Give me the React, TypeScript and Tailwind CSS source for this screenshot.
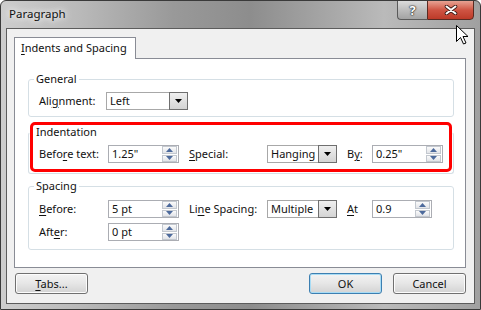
import React from "react";

function U({ c }: { c: string }) {
  return <span className="underline underline-offset-[2px] decoration-1">{c}</span>;
}

function Arrow({ up }: { up?: boolean }) {
  return (
    <svg width="7" height="4" viewBox="0 0 7 4">
      <path d={up ? "M0 4 L3.5 0 L7 4 Z" : "M0 0 L3.5 4 L7 0 Z"} fill="#4d6a9c" />
    </svg>
  );
}

function Spinner() {
  return (
    <div className="flex flex-col gap-px w-[15px] h-[16px] mr-px">
      <div className="flex-1 flex items-center justify-center border border-[#c3c8cf] bg-linear-to-b from-[#fbfbfb] to-[#e2e4e8]">
        <Arrow up />
      </div>
      <div className="flex-1 flex items-center justify-center border border-[#c3c8cf] bg-linear-to-b from-[#fbfbfb] to-[#e2e4e8]">
        <Arrow />
      </div>
    </div>
  );
}

function Spin({ value, w }: { value: string; w: string }) {
  return (
    <div className={`flex items-center h-[18px] border border-[#abadb3] bg-white ${w}`}>
      <span className="flex-1 pl-[3px] leading-[16px] whitespace-nowrap">{value}</span>
      <Spinner />
    </div>
  );
}

function Combo({ value, w }: { value: string; w: string }) {
  return (
    <div className={`flex items-center h-[18px] border border-[#a8a8a8] bg-white ${w}`}>
      <span className="flex-1 pl-[3px] leading-[16px] whitespace-nowrap">{value}</span>
      <div className="w-[19px] h-[18px] -mr-px border border-[#6f6f6f] bg-linear-to-b from-[#efefef] to-[#d4d4d4] flex items-center justify-center">
        <svg width="7" height="4" viewBox="0 0 7 4">
          <path d="M0 0 L3.5 4 L7 0 Z" fill="#000" />
        </svg>
      </div>
    </div>
  );
}

function Btn({ children, def }: { children: React.ReactNode; def?: boolean }) {
  return (
    <div
      className={`w-[73px] h-[21px] rounded-[3px] border flex items-center justify-center leading-[16px] bg-linear-to-b from-[#f3f3f3] via-[#e6e6e6] to-[#d3d3d3] ${
        def ? "border-[#3c7fb1] shadow-[inset_0_0_0_1px_#a8dcf5]" : "border-[#707070] shadow-[inset_0_0_0_1px_#fcfcfc]"
      }`}
    >
      {children}
    </div>
  );
}

export default function App() {
  return (
    <div className="relative w-[481px] h-[310px] overflow-hidden flex flex-col border border-[#3a3a3a] rounded-t-[6px] bg-[linear-gradient(to_right,#cdcdcd_0%,#bababa_16%,#999999_36%,#8d8d8d_52%,#a6a6a6_68%,#bababa_80%,#a0a0a0_100%)] px-[5px] pb-[5px] text-[11px] text-[#111] [font-family:'Noto_Sans',sans-serif] whitespace-nowrap">
      {/* title bar */}
      <div className="h-[27px] flex items-start">
        <div className="pl-[3px] pt-[5px] leading-[16px] text-[11.5px] [text-shadow:0_0_6px_#ffffff,0_0_10px_#ffffff]">Paragraph</div>
        <div className="flex-1" />
        <div className="flex mr-px -mt-px">
          <div className="w-[30px] h-[20px] rounded-bl-[4px] border border-[#5a5a5a] border-r-0 bg-linear-to-b from-[#dcdcdc] via-[#bdbdbd] to-[#a3a3a3] flex items-center justify-center text-white font-bold text-[13px] leading-none [text-shadow:0_0_1px_#222,0_0_1px_#222,0_0_2px_#333]">
            ?
          </div>
          <div className="w-[47px] h-[20px] rounded-br-[4px] border border-[#5a2a22] bg-linear-to-b from-[#e7a293] via-[#cf5443] to-[#bd3a28] flex items-center justify-center">
            <svg width="14" height="10" viewBox="0 0 14 10">
              <path d="M2.5 1.5 L11.5 8.5 M11.5 1.5 L2.5 8.5" stroke="#3a1a16" strokeWidth="3.6" strokeLinecap="round" />
              <path d="M2.5 1.5 L11.5 8.5 M11.5 1.5 L2.5 8.5" stroke="#ffffff" strokeWidth="2" strokeLinecap="round" />
            </svg>
          </div>
        </div>
      </div>

      {/* client */}
      <div className="flex-1 border border-[#5c5c5c] bg-[#f0f0f0] flex flex-col pl-[7px] pr-[8px] pt-[8px]">
        <div className="w-[122px] h-[22px] -mb-px relative z-10 bg-white border border-[#898c95] border-b-0 pl-[6px] pt-[2px] leading-[16px]">
          <U c="I" />ndents and Spacing
        </div>
        <div className="h-[210px] bg-white border border-[#898c95] flex flex-col pl-[13px] pr-[11px] pt-[12px]">
          {/* General */}
          <fieldset className="border border-[#d5dfe5] rounded-[3px] p-0 m-0">
            <legend className="ml-[5px] px-[2px] leading-[16px]">General</legend>
            <div className="pl-[10px] pt-[5px] pb-[6px]">
              <div className="flex items-center h-[18px]">
                <div className="w-[67px]">
                  Ali<U c="g" />nment:
                </div>
                <Combo value="Left" w="w-[82px]" />
              </div>
            </div>
          </fieldset>

          {/* Indentation */}
          <fieldset className="mt-[7px] border border-[#d5dfe5] border-t-transparent rounded-[3px] p-0">
            <legend className="ml-[5px] px-[2px] leading-[16px]">Indentation</legend>
            <div className="pl-[10px] pt-[5px] pb-[10px]">
              <div className="flex items-center h-[18px]">
                <div className="w-[69px]">
                  Befo<U c="r" />e text:
                </div>
                <Spin value={'1.25"'} w="w-[71px]" />
                <div className="ml-[10px] w-[78px]">
                  <U c="S" />pecial:
                </div>
                <Combo value="Hanging" w="w-[70px]" />
                <div className="ml-[10px] w-[25px]">
                  B<U c="y" />:
                </div>
                <Spin value={'0.25"'} w="w-[71px]" />
              </div>
            </div>
          </fieldset>

          {/* Spacing */}
          <fieldset className="mt-[4px] border border-[#d5dfe5] rounded-[3px] p-0">
            <legend className="ml-[5px] px-[2px] leading-[16px]">Spacing</legend>
            <div className="pl-[10px] pt-[6px] pb-[8px] flex flex-col gap-[5px]">
              <div className="flex items-center h-[18px]">
                <div className="w-[69px]">
                  <U c="B" />efore:
                </div>
                <Spin value="5 pt" w="w-[71px]" />
                <div className="ml-[10px] w-[78px]">
                  Li<U c="n" />e Spacing:
                </div>
                <Combo value="Multiple" w="w-[70px]" />
                <div className="ml-[10px] w-[25px]">
                  <U c="A" />t
                </div>
                <Spin value="0.9" w="w-[60px]" />
              </div>
              <div className="flex items-center h-[18px]">
                <div className="w-[69px]">
                  Aft<U c="e" />r:
                </div>
                <Spin value="0 pt" w="w-[71px]" />
              </div>
            </div>
          </fieldset>
        </div>

        {/* buttons */}
        <div className="mt-[5px] flex pl-px">
          <Btn>
            <span>
              <U c="T" />abs...
            </span>
          </Btn>
          <div className="flex-1" />
          <Btn def>OK</Btn>
          <div className="w-[11px]" />
          <Btn>Cancel</Btn>
        </div>
      </div>

      {/* red annotation */}
      <div className="absolute left-[29px] top-[121px] w-[422px] h-[50px] border-[3px] border-[#ff0000] rounded-[5px] pointer-events-none" />

      {/* mouse cursor */}
      <svg className="absolute left-[455px] top-[24px]" width="13" height="20" viewBox="0 0 13 20">
        <path d="M0.5 0.5 L0.5 16.5 L4.5 12.5 L7.5 19 L10 18 L7 11.5 L12 11.5 Z" fill="#ffffff" stroke="#000000" strokeWidth="1" strokeLinejoin="miter" />
      </svg>
    </div>
  );
}
